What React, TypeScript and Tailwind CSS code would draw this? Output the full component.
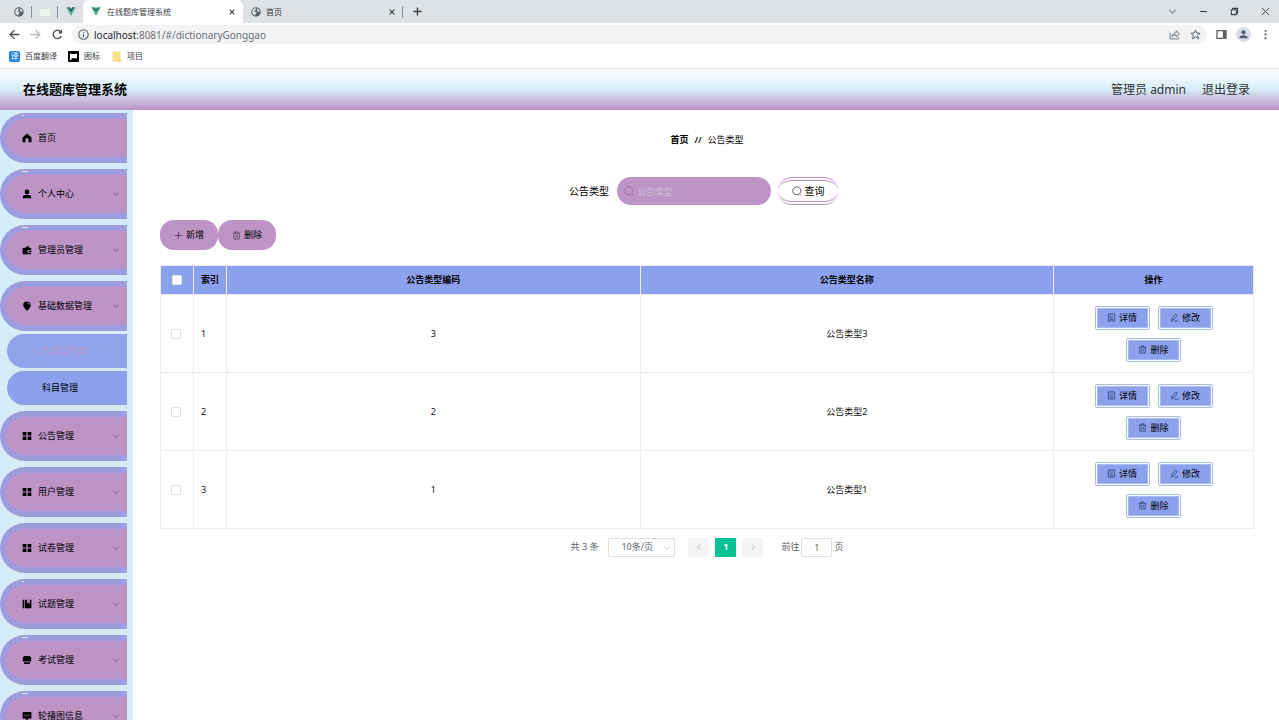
import React from "react";

type IconProps = { className?: string };

function Globe({ className = "" }: IconProps) {
  return (
    <svg viewBox="0 0 20 20" className={className} aria-hidden="true">
      <circle cx="10" cy="10" r="9.5" fill="#5f6368" />
      <path d="M3 6.500C4.500 4 6.500 2.700 9.500 2.700c1 1.300-.5 2-.5 3.200 0 1.500-2 1.100-2.500 2.300-.3 1.200 2.500.8 4 1.600 1.700 1 .2 2.500-.8 3.200-1 .9-.6 2.600-1.700 4.200C4.800 16.300 2.700 13.500 2.700 10Z" fill="#dee1e6" />
      <path d="M12.500 3.200c2.700.9 4.500 3.200 4.800 6-1.200 1.200-2.300.2-3.300.2-1.300-.2-.7-1.700-1.700-2.600-1-1.200-.6-2.700.2-3.600Z" fill="#dee1e6" />
    </svg>
  );
}

function Vue({ className = "" }: IconProps) {
  return (
    <svg viewBox="0 0 22 19" className={className} aria-hidden="true">
      <path d="M0 0h4.400L11 11.400 17.600 0H22L11 19Z" fill="#41b883" />
      <path d="M4.400 0h4.100L11 4.400 13.500 0h4.100L11 11.400Z" fill="#35495e" />
    </svg>
  );
}

function Stroke({ d, className = "", width = 1, box = 10 }: { d: string; className?: string; width?: number; box?: number }) {
  return (
    <svg viewBox={`0 0 ${box} ${box}`} className={className} fill="none" stroke="currentColor" strokeWidth={width} aria-hidden="true">
      <path d={d} />
    </svg>
  );
}

const CLOSE = "M2 2l6 6M8 2L2 8";
const DOWN = "M1.500 3.300L5 6.700l3.500-3.400";
const TRASH = "M1 2.500h8M3.500 2.500V1h3v1.500M2 2.500v6.500h6V2.500M4.200 4.300v3M5.800 4.300v3";
const SEARCH = "M7.100 8.100A4 4 0 1 1 8.100 7.100M6.900 7.300L8.900 9.300";
const PEN = "M2.200 6L6.300 1.100l1.900 1.500L4.300 7.400l-2.400.9ZM4.500 9h4.800M1 9h1.200";
const DOC = "M1.500 1h7v8h-7ZM3 3.200h1.800M3 5.200h3.600M3 7.200h4M5.600 3.200h1";

const SOLID: Record<string, string> = {
  home: "M5 .5L9.500 4.500V9.300H6.500V6.600a1.500 1.500 0 0 0-3 0V9.300H.5V4.500Z",
  user: "M5 .6a2.400 2.400 0 1 1 0 4.800A2.400 2.400 0 0 1 5 .6ZM.8 9.300V8c0-1.300 1.200-2 2.400-2h3.600c1.200 0 2.400.7 2.400 2v1.300Z",
  wallet: "M.6 3h2L6.300.8 7.500 3h1.700v2H6.500a1.300 1.300 0 0 0 0 2.700h2.700v1.500H.6ZM6.600 5.800h2.900v1.200H6.600Z",
  bulb: "M5 .5a3.800 3.800 0 0 1 3.800 3.700C8.800 6 7.300 6.800 6.800 8L5.600 9.500H4.400L3.400 8C2.700 6.700 1.200 6 1.200 4.200A3.800 3.800 0 0 1 5 .5ZM5.800 1.600v.8c.8.100 1.200.6 1.300 1.300h.8C7.800 2.500 7 1.700 5.800 1.600Z",
  grid: "M.7 1h3.700v3.500H.7ZM5.600 1h3.700v3.500H5.600ZM.7 5.600h3.700v3.500H.7ZM5.600 5.600h3.700v3.500H5.600Z",
  book: "M.6.800h1.300v8.400H.6ZM2.700.8h2.600v3.900l1.300-1.200 1.300 1.200V.8h1.500v8.400H2.700Z",
  printer: "M1.800.9h6.400v1h1v4.600H.8V1.900h1ZM2 7.200h6v1.900H2Z",
  chat: "M.6.900h8.800v6.700H6.600L5 9.400 3.400 7.600H.6ZM2.500 3.700v1.100h1V3.700ZM4.500 3.700v1.100h1V3.700ZM6.500 3.700v1.100h1V3.700Z",
};

function Solid({ name }: { name: string }) {
  return (
    <svg viewBox="0 0 10 10" className="h-[10px] w-[10px] shrink-0" fill="black" fillRule="evenodd" aria-hidden="true">
      <path d={SOLID[name]} />
    </svg>
  );
}

function Browser() {
  return (
    <div className="shrink-0 border-b border-[#dfe1e4] text-[8px] text-[#3c4043]">
      <div className="flex h-[23px] items-center bg-[#dee1e6]">
        <div className="flex w-[83px] items-center pl-[14px]">
          <Globe className="h-[10px] w-[10px]" />
          <span className="ml-[7px] h-3 w-px bg-[#8b8f94]" />
          <svg viewBox="0 0 10 9" className="ml-2 h-[9px] w-[10px]" aria-hidden="true">
            <path d="M0 0h10v9H0Z" fill="#f4f6f3" />
            <path d="M0 0h10v2H0Z" fill="#d3e6d6" />
            <path d="M0 4.500h10M0 6.800h10M3.300 2v7M6.700 2v7" stroke="#e2eae2" strokeWidth=".5" />
          </svg>
          <span className="ml-[7px] h-3 w-px bg-[#8b8f94]" />
          <Vue className="ml-2 h-[9px] w-[10px]" />
        </div>
        <div className="flex h-full w-40 items-center rounded-t-md bg-white pl-2 pr-[7px]">
          <Vue className="h-[9px] w-[10px]" />
          <span className="ml-1.5 flex-1">在线题库管理系统</span>
          <button aria-label="关闭标签页"><Stroke d={CLOSE} className="h-2 w-2" width={1.4} /></button>
        </div>
        <div className="flex h-full w-[159px] items-center pl-2 pr-[6px]">
          <Globe className="h-[10px] w-[10px]" />
          <span className="ml-[5px] flex-1">首页</span>
          <button aria-label="关闭标签页"><Stroke d={CLOSE} className="h-2 w-2" width={1.4} /></button>
        </div>
        <span className="h-3 w-px bg-[#8b8f94]" />
        <button aria-label="新建标签页" className="ml-2.5"><Stroke d="M5 .5v9M.5 5h9" className="h-[9px] w-[9px]" width={1.5} /></button>
        <div className="ml-auto flex h-[18px] items-center gap-[22px] pr-[9px]">
          <button aria-label="搜索标签页"><Stroke d={DOWN} className="h-[9px] w-[9px]" /></button>
          <button aria-label="最小化"><Stroke d="M1 5h8" className="h-[9px] w-[9px]" width={1.2} /></button>
          <button aria-label="还原"><Stroke d="M1.500 3h5.500v5.500H1.500ZM3 3V1.500h5.500V7H7" className="h-[9px] w-[9px]" width={1.2} /></button>
          <button aria-label="关闭"><Stroke d="M1 1l8 8M9 1L1 9" className="h-[9px] w-[9px]" /></button>
        </div>
      </div>
      <div className="flex h-[23px] items-center pl-[9px] pr-2">
        <button aria-label="后退"><Stroke d="M9.500 5H1M5 1L1 5l4 4" className="h-[11px] w-[11px] text-[#4a4d51]" width={1.2} /></button>
        <button aria-label="前进" className="ml-[10px]"><Stroke d="M.5 5H9M5 1l4 4-4 4" className="h-[11px] w-[11px] text-[#b6b8bb]" width={1.2} /></button>
        <button aria-label="刷新" className="ml-[11px]">
          <svg viewBox="0 0 11 11" className="h-[11px] w-[11px]" aria-hidden="true">
            <path d="M9.300 7A4.200 4.200 0 1 1 8.700 2.800" fill="none" stroke="#4a4d51" strokeWidth="1.400" />
            <path d="M10 .6v4H6Z" fill="#4a4d51" />
          </svg>
        </button>
        <div className="ml-[9px] flex h-[19px] flex-1 items-center rounded-full bg-[#f1f3f4] pl-[6px] pr-[6px]">
          <Stroke d="M5 .7a4.300 4.300 0 1 0 0 8.600A4.300 4.300 0 0 0 5 .7ZM5 4.400v3.100M5 2.400v1.100" className="h-[11px] w-[11px] text-[#5f6368]" />
          <a href="#/dictionaryGonggao" className="ml-[5px] text-[10px] leading-4 text-[#6d7175]"><span className="text-[#25282c]">localhost</span>:8081/#/dictionaryGonggao</a>
          <button aria-label="分享" className="ml-auto text-[#6b6f73]"><Stroke d="M1 3.500V9h7.500V7.500M2.800 7C3 4.500 4.500 3.500 6.500 3.500V1.500l3 2.900-3 2.800V5.300C5 5.200 3.800 5.800 2.800 7Z" className="h-[11px] w-[11px]" width={0.8} /></button>
          <button aria-label="收藏" className="ml-[10px] text-[#5f6368]"><Stroke d="M5 .9l1.200 2.800 3 .2L6.900 5.900l.8 3L5 7.300l-2.700 1.600.8-3L.8 3.900l3-.2Z" className="h-[11px] w-[11px]" width={0.9} /></button>
        </div>
        <button aria-label="侧边栏" className="ml-[9px] text-[#5f6368]">
          <svg viewBox="0 0 10 10" className="h-[11px] w-[11px]" aria-hidden="true"><path d="M.3.800h9.400v8.400H.3ZM1.500 2v6h4.700V2Z" fill="currentColor" fillRule="evenodd" /></svg>
        </button>
        <button aria-label="用户" className="ml-[9px] flex h-[15px] w-[15px] items-center justify-center rounded-full bg-[#d9dde6]">
          <svg viewBox="0 0 10 10" className="h-[9px] w-[9px]" fill="#535e70" aria-hidden="true"><circle cx="5" cy="2.600" r="2.300" /><path d="M.6 9.300V8c0-3 8.800-3 8.800 0v1.300Z" /></svg>
        </button>
        <button aria-label="更多" className="ml-[9px]">
          <svg viewBox="0 0 10 10" className="h-[11px] w-[11px]" fill="#5f6368" aria-hidden="true"><path d="M4.200.8h1.700v1.700H4.200ZM4.200 4.200h1.700v1.700H4.200ZM4.200 7.600h1.700v1.700H4.200Z" /></svg>
        </button>
      </div>
      <div className="flex h-[22px] items-center gap-[11px] pb-[2px] pl-[9px]">
        <a href="#translate" className="flex items-center gap-[5px]">
          <span className="flex h-[11px] w-[11px] items-center justify-center rounded-xs bg-[#1f83ea] text-[8px] leading-none text-white">译</span>百度翻译
        </a>
        <a href="#icons" className="flex items-center gap-[5px]">
          <svg viewBox="0 0 11 11" className="h-[11px] w-[11px]" aria-hidden="true"><rect width="11" height="11" rx="1" fill="#000" /><path d="M2 9V2.500l2 .6h3l2-.6v5L7 7.200H4L3 9Z" fill="#fff" /></svg>图标
        </a>
        <a href="#projects" className="flex items-center gap-[6px]">
          <svg viewBox="0 0 9 11" className="ml-px h-[11px] w-[9px]" aria-hidden="true"><path d="M.5.500h8v10h-8Z" fill="#fbdf86" /><path d="M6.500 8h2v2.500h-2Z" fill="#f0c85c" /></svg>项目
        </a>
      </div>
    </div>
  );
}

type Item = { label: string; icon: string; mark?: "dot" | "dash"; leaf?: boolean; children?: string[] };

const MENU: Item[] = [
  { label: "首页", icon: "home", mark: "dot", leaf: true },
  { label: "个人中心", icon: "user", mark: "dash" },
  { label: "管理员管理", icon: "wallet", mark: "dash" },
  { label: "基础数据管理", icon: "bulb", children: ["公告类型管理", "科目管理"] },
  { label: "公告管理", icon: "grid" },
  { label: "用户管理", icon: "grid" },
  { label: "试卷管理", icon: "grid" },
  { label: "试题管理", icon: "book", mark: "dot" },
  { label: "考试管理", icon: "printer", mark: "dash" },
  { label: "轮播图信息", icon: "chat", mark: "dash" },
];

function Sidebar() {
  return (
    <nav className="w-[133px] shrink-0 overflow-hidden bg-[#d5edf8] pr-[6px] pt-[3px] text-[9px]">
      <ul className="flex flex-col gap-[6px]">
        {MENU.map((item) => (
          <li key={item.label}>
            <button className="relative flex h-[50px] w-full items-center gap-[6px] rounded-l-[25px] border-y-[6px] border-l-[6px] border-[#9c9cdf] bg-[#bc94c6] pl-4 pr-[7px] text-black">
              {item.mark === "dash" && <span className="absolute -top-1 left-4 h-px w-[6px] bg-[#e2edfa]" />}
              {item.mark === "dot" && <span className="absolute -top-1 left-4 h-px w-[2px] bg-[#e2edfa]" />}
              <Solid name={item.icon} />
              <span>{item.label}</span>
              {!item.leaf && <Stroke d={DOWN} className="ml-auto h-[8px] w-[8px] text-[#6d5672]" />}
            </button>
            {item.children && (
              <ul className="mt-[3px] flex flex-col gap-[3px] pl-[7px]">
                {item.children.map((child, i) => (
                  <li key={child}>
                    <button className={`h-[34px] w-full rounded-l-[17px] pr-[14px] ${i === 0 ? "bg-[#90a3ea] text-[#b496cb]" : "bg-[#8ca1ee] text-black"}`}>{child}</button>
                  </li>
                ))}
              </ul>
            )}
          </li>
        ))}
      </ul>
    </nav>
  );
}

const ROWS = [
  { code: 3, name: "公告类型3" },
  { code: 2, name: "公告类型2" },
  { code: 1, name: "公告类型1" },
];

const CELL = "border border-[#ebeef5]";

function Check({ label }: { label: string }) {
  return <input type="checkbox" aria-label={label} className="block h-[10px] w-[10px] appearance-none rounded-[1px] border border-[#dcdfe6] bg-white" />;
}

function Action({ d, label }: { d: string; label: string }) {
  return (
    <button className="flex h-6 w-[55px] items-center justify-center gap-[3px] rounded-[2px] border-[3px] border-double border-[#a9b9f2] bg-[#8ca1ee] bg-clip-padding text-[9px] text-black">
      <Stroke d={d} className="h-[9px] w-[9px] text-[#33406e]" width={0.9} />
      {label}
    </button>
  );
}

function DataTable() {
  return (
    <table className="mt-[15px] w-full table-fixed border-collapse text-[9px] text-[#111111]">
      <colgroup>
        <col className="w-[33px]" />
        <col className="w-[33px]" />
        <col />
        <col />
        <col className="w-[200px]" />
      </colgroup>
      <thead>
        <tr className="h-[29px] bg-[#8ca1ee] text-black">
          <th className={`${CELL} pl-[11px]`}><Check label="全选" /></th>
          <th className={CELL}>索引</th>
          <th className={CELL}>公告类型编码</th>
          <th className={CELL}>公告类型名称</th>
          <th className={CELL}>操作</th>
        </tr>
      </thead>
      <tbody>
        {ROWS.map((row, i) => (
          <tr key={row.code} className="h-[78px]">
            <td className={`${CELL} pl-[10px]`}><Check label={`选择${row.name}`} /></td>
            <td className={`${CELL} pl-[7px]`}>{i + 1}</td>
            <td className={`${CELL} text-center`}>{row.code}</td>
            <td className={`${CELL} text-center`}>{row.name}</td>
            <td className={CELL}>
              <div className="flex flex-wrap justify-center gap-2 px-8">
                <Action d={DOC} label="详情" />
                <Action d={PEN} label="修改" />
                <Action d={TRASH} label="删除" />
              </div>
            </td>
          </tr>
        ))}
      </tbody>
    </table>
  );
}

function Pagination() {
  return (
    <div className="mt-2 flex h-5 items-center justify-center text-[9px] text-[#606266]">
      <span>共 3 条</span>
      <div className="relative ml-[10px]">
        <select aria-label="每页条数" className="block h-[19px] w-[67px] appearance-none rounded-[2px] border border-[#dcdfe6] bg-white pl-3">
          <option>10条/页</option>
        </select>
        <Stroke d={DOWN} className="pointer-events-none absolute right-1 top-[6px] h-[8px] w-[8px] text-[#c0c4cc]" />
      </div>
      <div className="ml-[13px] flex gap-[6px]">
        <button aria-label="上一页" className="flex h-[19px] w-[21px] items-center justify-center rounded-[1px] bg-[#f4f4f5]">
          <Stroke d="M6.500 1.500L3 5l3.500 3.500" className="h-[8px] w-[8px] text-[#b4b7be]" width={1.2} />
        </button>
        <button className="h-[19px] w-[21px] rounded-[1px] bg-[#00c292] font-bold text-white">1</button>
        <button aria-label="下一页" className="flex h-[19px] w-[21px] items-center justify-center rounded-[1px] bg-[#f4f4f5]">
          <Stroke d="M3.500 1.500L7 5 3.500 8.500" className="h-[8px] w-[8px] text-[#b4b7be]" width={1.2} />
        </button>
      </div>
      <label htmlFor="page" className="ml-[18px]">前往</label>
      <input id="page" defaultValue="1" className="mx-[2px] h-[19px] w-[31px] rounded-[2px] border border-[#dcdfe6] text-center" />
      <span>页</span>
    </div>
  );
}

export default function App() {
  return (
    <div className="flex h-screen flex-col overflow-hidden bg-white font-['Noto_Sans','Noto_Sans_CJK_SC',sans-serif]">
      <Browser />
      <header className="flex h-[41px] shrink-0 items-center bg-linear-to-b from-white via-[#d5edf8] to-[#bc94c6] pl-[23px] pr-[29px]">
        <h1 className="text-[13px] font-bold text-black">在线题库管理系统</h1>
        <div className="ml-auto flex gap-4 text-[12px] text-[#333333]">
          <span>管理员 admin</span>
          <a href="#/login">退出登录</a>
        </div>
      </header>
      <div className="flex min-h-0 flex-1">
        <Sidebar />
        <main className="min-w-0 flex-1 pl-[27px] pr-[25px] text-black">
          <div className="mt-[23px] flex h-[14px] items-center justify-center gap-[6px] text-[9px]">
            <a href="#/" className="font-bold">首页</a>
            <span className="font-semibold">//</span>
            <span>公告类型</span>
          </div>
          <form className="mt-[30px] flex h-7 items-center justify-center pr-[7px]">
            <label htmlFor="type" className="text-[10px]">公告类型</label>
            <div className="relative ml-2">
              <Stroke d={SEARCH} className="absolute left-[7px] top-[9px] h-[10px] w-[10px] text-[#8d7596]" width={0.8} />
              <input id="type" placeholder="公告类型" className="block h-7 w-[154px] rounded-full bg-[#bc94c6] pl-5 text-[9px] placeholder:text-[#c4c0cf]" />
            </div>
            <button type="button" className="ml-[7px] flex h-7 w-[60px] items-center justify-center gap-[3px] rounded-[14px] border-y-4 border-double border-[#bc94c6] text-[10px]">
              <Stroke d={SEARCH} className="h-[10px] w-[10px] text-[#333333]" width={0.8} />
              查询
            </button>
          </form>
          <div className="mt-[15px] flex text-[9px]">
            <button className="flex h-[30px] w-[58px] items-center justify-center gap-[3px] rounded-[14px] bg-[#bc94c6]">
              <Stroke d="M5 1v8M1 5h8" className="h-[9px] w-[9px] text-[#3a2c3e]" width={0.8} />
              新增
            </button>
            <button className="flex h-[30px] w-[58px] items-center justify-center gap-[3px] rounded-[14px] bg-[#bc94c6]">
              <Stroke d={TRASH} className="h-[9px] w-[9px] text-[#4a3b4e]" width={0.8} />
              删除
            </button>
          </div>
          <DataTable />
          <Pagination />
        </main>
      </div>
    </div>
  );
}
